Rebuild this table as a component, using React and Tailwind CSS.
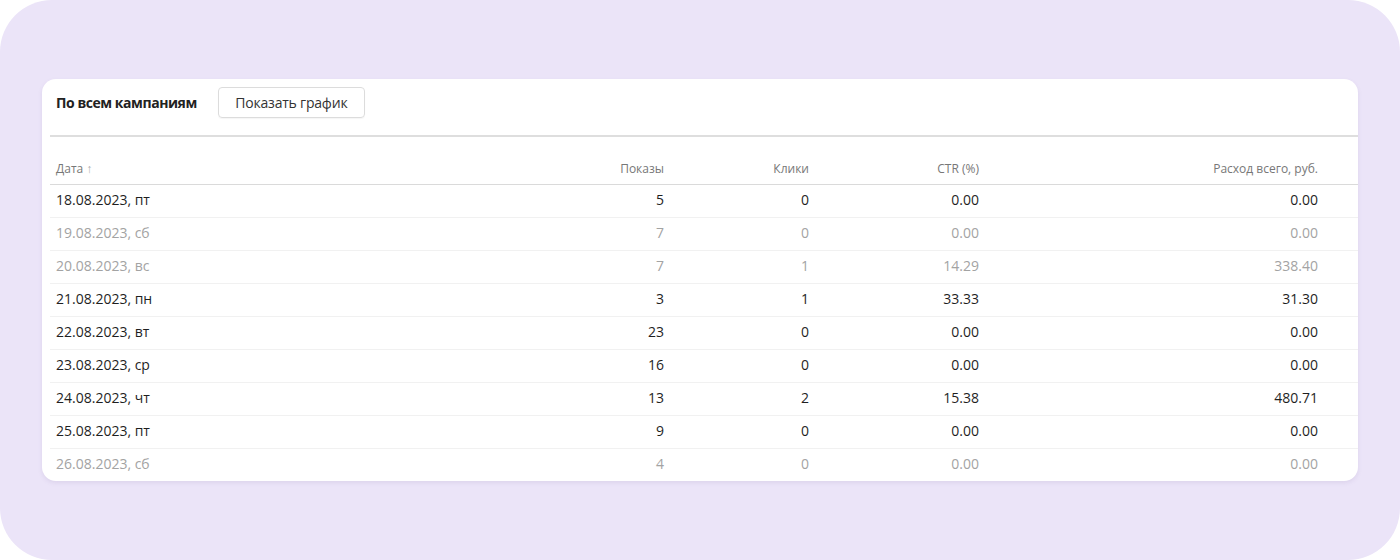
import React from "react";

const rows = [
  ["18.08.2023, пт", "5", "0", "0.00", "0.00", false],
  ["19.08.2023, сб", "7", "0", "0.00", "0.00", true],
  ["20.08.2023, вс", "7", "1", "14.29", "338.40", true],
  ["21.08.2023, пн", "3", "1", "33.33", "31.30", false],
  ["22.08.2023, вт", "23", "0", "0.00", "0.00", false],
  ["23.08.2023, ср", "16", "0", "0.00", "0.00", false],
  ["24.08.2023, чт", "13", "2", "15.38", "480.71", false],
  ["25.08.2023, пт", "9", "0", "0.00", "0.00", false],
  ["26.08.2023, сб", "4", "0", "0.00", "0.00", true],
];

export default function App() {
  return (
    <div className="w-[1400px] h-[560px] bg-white" style={{ fontFamily: '"Open Sans", "Noto Sans", sans-serif' }}>
      <div className="w-full h-full bg-[#ebe4f8] rounded-[52px] pt-[79px] px-[42px]">
        <div className="bg-white rounded-[14px] shadow-[0_2px_4px_rgba(120,100,160,0.12)] h-[402px] overflow-hidden">
          <div className="flex items-center pl-[14px] pt-[8px] pb-[17px] gap-[21px]">
            <span className="text-[14px] font-bold text-[#222] tracking-[-0.45px]">По всем кампаниям</span>
            <button className="h-[31px] w-[147px] border border-[#dcdcdc] rounded-[4px] text-[14px] text-[#333] tracking-[-0.2px] shadow-[0_1px_1px_rgba(0,0,0,0.04)]">
              Показать график
            </button>
          </div>
          <div className="ml-[8px] h-[2px] bg-[#dedede]" />
          <div className="ml-[8px]">
            <div className="grid grid-cols-[400px_208px_145px_170px_339px] pl-[6px] pr-[40px] h-[48px] items-end pb-[6px] border-b border-[#dadada] text-[12px] text-[#777]">
              <span>Дата <span className="text-[#aaa]">↑</span></span>
              <span className="text-right">Показы</span>
              <span className="text-right">Клики</span>
              <span className="text-right">CTR (%)</span>
              <span className="text-right">Расход всего, руб.</span>
            </div>
            {rows.map((r, i) => (
              <div
                key={i}
                className={`grid grid-cols-[400px_208px_145px_170px_339px] pl-[6px] pr-[40px] items-center pb-[4px] text-[14px] ${
                  i < rows.length - 1 ? "h-[33px] border-b border-[#f1f1f1]" : "h-[32px]"
                } ${r[5] ? "text-[#a3a3a3]" : "text-[#1f1f1f]"}`}
              >
                <span>{r[0]}</span>
                <span className="text-right">{r[1]}</span>
                <span className="text-right">{r[2]}</span>
                <span className="text-right">{r[3]}</span>
                <span className="text-right">{r[4]}</span>
              </div>
            ))}
          </div>
        </div>
      </div>
    </div>
  );
}
